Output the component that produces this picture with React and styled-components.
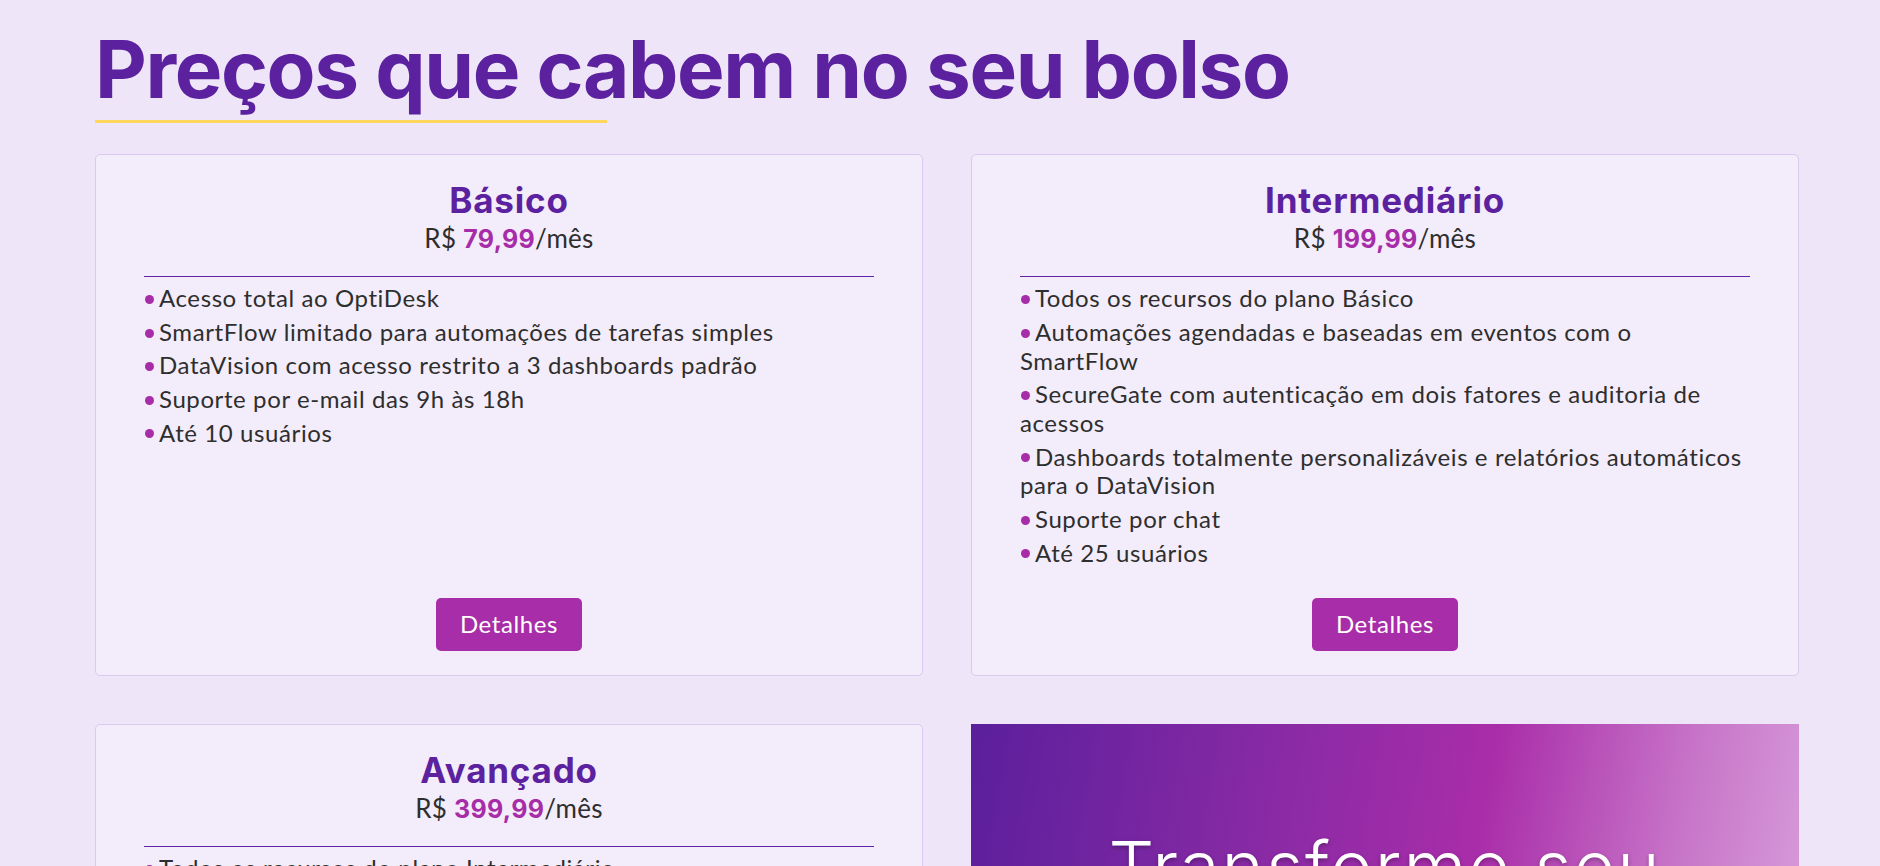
import React from 'react';
import styled, {createGlobalStyle} from 'styled-components';

const GlobalStyle = createGlobalStyle`
  html, body {
    margin: 0;
    padding: 0;
    background: #efe5f8;
  }
  body {
    font-family: Lato, "Open Sans", sans-serif;
    color: #2e2e2e;
  }
  * {
    box-sizing: border-box;
  }
`;

const Page = styled.main`
  padding: 21px 81px 48px 95px;
`;

const Heading = styled.h1`
  margin: 0;
  font-family: Inter, "Noto Sans", sans-serif;
  font-weight: 700;
  font-size: 80px;
  line-height: 96px;
  letter-spacing: -1.4px;
  color: #5b219e;

  &::after {
    content: "";
    display: block;
    width: 512px;
    height: 3px;
    margin-top: 3px;
    background: #ffd75e;
  }
`;

const Grid = styled.div`
  display: grid;
  grid-template-columns: 1fr 1fr;
  gap: 48px;
  margin-top: 31px;
`;

const Card = styled.article`
  display: flex;
  flex-direction: column;
  background: #f3ecfa;
  border: 1px solid #d9caef;
  border-radius: 5px;
  padding: 24px 48px;
  text-align: center;
`;

const PlanName = styled.h2`
  margin: 0;
  font-family: Inter, "Noto Sans", sans-serif;
  font-weight: 700;
  font-size: 35px;
  line-height: 1.2;
  letter-spacing: 0.8px;
  color: #5b219e;
`;

const Price = styled.p`
  margin: 2px 0 0;
  font-size: 26px;
  line-height: 1.2;
  letter-spacing: 0.3px;
  color: #2e2e2e;

  strong {
    font-family: Inter, "Noto Sans", sans-serif;
    font-weight: 700;
    font-size: 25px;
    color: #a72ca8;
  }
`;

const Divider = styled.hr`
  width: 100%;
  margin: 22px 0 7px;
  border: 0;
  border-top: 1px solid #5f23a3;
`;

const Features = styled.ul`
  list-style: none;
  margin: 0 0 26px;
  padding: 0;
  text-align: left;
`;

const Feature = styled.li`
  font-size: 24px;
  line-height: 1.2;
  letter-spacing: 0.6px;
  margin-bottom: 4.8px;

  &::before {
    content: "";
    display: inline-block;
    width: 9px;
    height: 9px;
    margin: 0 5px 3px 1px;
    border-radius: 50%;
    background: #a72ca8;
    vertical-align: middle;
  }
`;

const Button = styled.button`
  align-self: center;
  margin-top: auto;
  padding: 12px 24px;
  border: 0;
  border-radius: 5px;
  background: #a82da8;
  color: #fff;
  font-family: Lato, "Open Sans", sans-serif;
  font-size: 24px;
  line-height: 1.2;
  letter-spacing: 0.6px;
  cursor: pointer;
`;

const Banner = styled.section`
  display: flex;
  flex-direction: column;
  align-items: center;
  padding: 100px 48px 48px;
  background: linear-gradient(100deg, #5b1f9c 0%, #8a2aa5 35%, #a92da9 58%, #c774c8 80%, #dba7de 100%);
  color: #fff;
  text-align: center;
`;

const BannerTitle = styled.h2`
  margin: 0;
  font-family: Inter, "Noto Sans", sans-serif;
  font-weight: 300;
  font-size: 72px;
  line-height: 1.2;
  letter-spacing: 2px;
  text-shadow: 0 2px 4px rgba(0, 0, 0, 0.3);
`;

const BannerText = styled.p`
  margin: 24px 0 32px;
  font-size: 24px;
  line-height: 1.4;
`;

const plans = [
    {
        name: 'Básico',
        price: '79,99',
        features: [
            'Acesso total ao OptiDesk',
            'SmartFlow limitado para automações de tarefas simples',
            'DataVision com acesso restrito a 3 dashboards padrão',
            'Suporte por e-mail das 9h às 18h',
            'Até 10 usuários',
        ],
    },
    {
        name: 'Intermediário',
        price: '199,99',
        features: [
            'Todos os recursos do plano Básico',
            'Automações agendadas e baseadas em eventos com o SmartFlow',
            'SecureGate com autenticação em dois fatores e auditoria de acessos',
            'Dashboards totalmente personalizáveis e relatórios automáticos para o DataVision',
            'Suporte por chat',
            'Até 25 usuários',
        ],
    },
    {
        name: 'Avançado',
        price: '399,99',
        features: [
            'Todos os recursos do plano Intermediário',
            'SmartFlow com automações ilimitadas e integrações via API',
            'SecureGate com controle de acesso por perfil e criptografia avançada',
            'DataVision com análises preditivas e exportação de dados',
            'Suporte prioritário 24/7',
            'Usuários ilimitados',
        ],
    },
];

function PlanCard({name, price, features}) {
    return (
        <Card>
            <PlanName>{name}</PlanName>
            <Price>R$ <strong>{price}</strong>/mês</Price>
            <Divider/>
            <Features>
                {features.map(item => <Feature key={item}>{item}</Feature>)}
            </Features>
            <Button>Detalhes</Button>
        </Card>
    );
}

export default function App() {
    return (
        <>
            <GlobalStyle/>
            <Page>
                <Heading>Preços que cabem no seu bolso</Heading>
                <Grid>
                    {plans.map(plan => <PlanCard key={plan.name} {...plan}/>)}
                    <Banner>
                        <BannerTitle>Transforme seu negócio hoje</BannerTitle>
                        <BannerText>Escolha o plano ideal e comece a otimizar sua empresa.</BannerText>
                        <Button>Fale conosco</Button>
                    </Banner>
                </Grid>
            </Page>
        </>
    );
}
